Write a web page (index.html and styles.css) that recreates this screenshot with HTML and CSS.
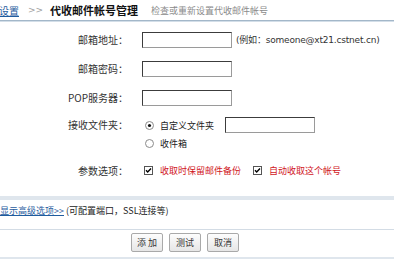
FILE: index.html
```html
<!DOCTYPE html>
<html lang="zh-cn">
<head>
    <meta charset="UTF-8">
    <meta name="viewport" content="width=device-width, initial-scale=1.0">
    <title>代收邮件帐号管理</title>
    <link rel="stylesheet" href="styles.css">
</head>
<body>
    <div class="topo">
        <a href="#" class="voltar">设置</a>
        <span class="seta">&gt;&gt;</span>
        <span class="titulo">代收邮件帐号管理</span>
        <span class="subtitulo">检查或重新设置代收邮件帐号</span>
    </div>

    <div class="formulario">
        <div class="linha">
            <div class="rotulo">邮箱地址：</div>
            <div class="campo"><input type="text" class="caixa"><span class="dica">(例如：someone@xt21.cstnet.cn)</span></div>
        </div>
        <div class="linha">
            <div class="rotulo">邮箱密码：</div>
            <div class="campo"><input type="password" class="caixa"></div>
        </div>
        <div class="linha">
            <div class="rotulo">POP服务器：</div>
            <div class="campo"><input type="text" class="caixa"></div>
        </div>
        <div class="linha pasta">
            <div class="rotulo">接收文件夹：</div>
            <div class="campo coluna">
                <div class="opcao">
                    <svg class="radio" width="9" height="9" viewBox="0 0 9 9"><circle cx="4.5" cy="4.5" r="4" fill="#fff" stroke="#8a8a8a"/><circle cx="4.5" cy="4.5" r="1.6" fill="#111"/></svg>
                    <span class="texto-pasta">自定义文件夹</span>
                    <input type="text" class="caixa">
                </div>
                <div class="opcao">
                    <svg class="radio" width="9" height="9" viewBox="0 0 9 9"><circle cx="4.5" cy="4.5" r="4" fill="#fff" stroke="#8a8a8a"/></svg>
                    <span>收件箱</span>
                </div>
            </div>
        </div>
        <div class="linha parametros">
            <div class="rotulo">参数选项：</div>
            <div class="campo">
                <svg class="check" width="9" height="9" viewBox="0 0 9 9"><rect x="0.5" y="0.5" width="8" height="8" fill="#fff" stroke="#555"/><path d="M2 4.2 L3.7 6 L7 2.5" fill="none" stroke="#000" stroke-width="1.4"/></svg>
                <span class="vermelho">收取时保留邮件备份</span>
                <svg class="check segundo" width="9" height="9" viewBox="0 0 9 9"><rect x="0.5" y="0.5" width="8" height="8" fill="#fff" stroke="#555"/><path d="M2 4.2 L3.7 6 L7 2.5" fill="none" stroke="#000" stroke-width="1.4"/></svg>
                <span class="vermelho">自动收取这个帐号</span>
            </div>
        </div>
    </div>

    <div class="avancado">
        <a href="#" class="link">显示高级选项&gt;&gt;</a><span>(可配置端口，SSL连接等)</span>
    </div>

    <div class="botoes">
        <button class="btn">添 加</button>
        <button class="btn">测试</button>
        <button class="btn">取消</button>
    </div>
</body>
</html>
```

FILE: styles.css
```css
body,html{
    margin: 0;
    background-color: #fff;
    font-family: "DejaVu Sans", "Noto Sans CJK SC", sans-serif;
    font-size: 9px;
    color: #222;
}
.topo{
    height: 20px;
    display: flex;
    align-items: center;
    border-bottom: 1px solid #a3b7c9;
    box-shadow: 0 1px 0 #d3dee8;
}
.voltar{
    margin-left: -1px;
    font-size: 10px;
    color: #1f5c9e;
    font-family: "Noto Sans CJK SC", sans-serif;
}
.seta{
    margin-left: 9px;
    color: #a0a0a0;
}
.titulo{
    margin-left: 7px;
    font-size: 11px;
    font-weight: bold;
    color: #111;
    font-family: "Noto Sans CJK SC", sans-serif;
}
.subtitulo{
    margin-left: 13px;
    color: #8a8a8a;
    font-family: "Noto Sans CJK SC", sans-serif;
}
.formulario{
    padding-top: 4px;
}
.linha{
    display: grid;
    grid-template-columns: 128px 1fr;
    column-gap: 14px;
    height: 29px;
    align-items: center;
}
.rotulo{
    text-align: right;
    font-size: 10px;
    color: #333;
    font-family: "Noto Sans CJK SC", sans-serif;
}
.campo{
    display: flex;
    align-items: center;
}
.caixa{
    box-sizing: border-box;
    width: 90px;
    height: 16px;
    margin: 0;
    padding: 0 2px;
    border: 1px solid #9a9a9a;
    border-top-color: #3c3c3c;
    border-left-color: #3c3c3c;
    background-color: #fff;
}
.dica{
    margin-left: 4px;
    color: #333;
    letter-spacing: -0.2px;
}
.pasta{
    height: 36px;
    margin-top: 4px;
    align-items: start;
}
.pasta .rotulo{
    line-height: 18px;
}
.coluna{
    flex-direction: column;
    align-items: flex-start;
}
.opcao{
    height: 18px;
    display: flex;
    align-items: center;
    font-family: "Noto Sans CJK SC", sans-serif;
}
.radio{
    margin-left: 3px;
    margin-right: 6px;
}
.texto-pasta{
    width: 65px;
}
.parametros{
    height: 18px;
    margin-top: 9px;
}
.check{
    margin-left: 2px;
    margin-right: 7px;
}
.check.segundo{
    margin-left: 12px;
}
.vermelho{
    color: #d0141c;
    font-family: "Noto Sans CJK SC", sans-serif;
}
.avancado{
    margin-top: 17px;
    border-top: 4px solid #dfe6ed;
    height: 33px;
    box-sizing: border-box;
    padding-bottom: 9px;
    display: flex;
    align-items: center;
    font-family: "Noto Sans CJK SC", sans-serif;
}
.link{
    color: #1f5c9e;
    margin-right: 2px;
}
.botoes{
    border-top: 1px solid #d3dce5;
    border-bottom: 2px solid #dfe6ed;
    height: 30px;
    box-sizing: border-box;
    padding-bottom: 3px;
    display: flex;
    align-items: center;
    gap: 6px;
    padding-left: 131px;
}
.btn{
    height: 19px;
    width: 32px;
    padding: 0;
    font-size: 9px;
    font-family: "Noto Sans CJK SC", sans-serif;
    color: #333;
    border: 1px solid #a9a9a9;
    border-radius: 2px;
    background: linear-gradient(#fdfdfd, #e6e6e6);
}
```
